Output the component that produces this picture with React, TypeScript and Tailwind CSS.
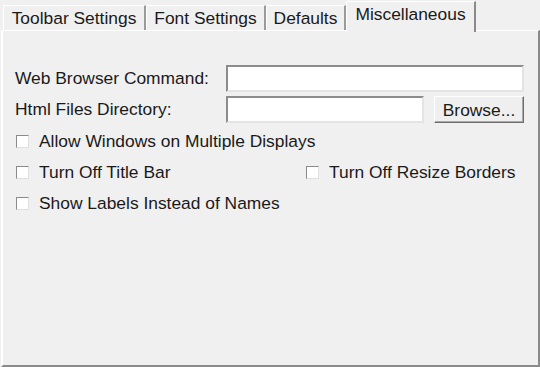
import React from "react";

const TABS = [
  { label: "Toolbar Settings", w: "w-[143px]" },
  { label: "Font Settings", w: "w-[120px]" },
  { label: "Defaults", w: "w-[80px]" },
];

function Check({ label }: { label: string }) {
  return (
    <label className="flex items-center gap-[10px] leading-[20px]">
      <span className="w-[13px] h-[13px] bg-white border border-t-[#8a8a8a] border-l-[#8a8a8a] border-r-[#e0e0e0] border-b-[#e0e0e0]" />
      <span>{label}</span>
    </label>
  );
}

function Field({ width }: { width: string }) {
  return (
    <div
      className={`${width} h-[27px] bg-white border-2 border-t-[#8c8c8c] border-l-[#8c8c8c] border-r-[#e4e4e4] border-b-[#e4e4e4]`}
    />
  );
}

export default function App() {
  return (
    <div
      className="w-[540px] h-[367px] bg-[#f0f0f0] text-[17.4px] text-[#1a1a1a] overflow-hidden"
      style={{ fontFamily: '"Liberation Sans", Arial, sans-serif' }}
    >
      {/* Tabs */}
      <div className="flex items-end h-[30px] pl-[3px]">
        {TABS.map((t) => (
          <div
            key={t.label}
            className={`${t.w} h-[25px] pt-[1px] flex items-center justify-center bg-[#f0f0f0] border-l border-t border-white border-r-2 border-r-[#9a9a9a] leading-none`}
          >
            {t.label}
          </div>
        ))}
        <div className="relative z-10 w-[130px] h-[31px] -mb-[2px] pt-[4px] text-center bg-[#f0f0f0] border-l border-t border-white border-r-2 border-r-[#8a8a8a] leading-none">
          Miscellaneous
        </div>
      </div>

      {/* Panel */}
      <div className="ml-[1px] w-[539px] h-[337px] border-l-2 border-t border-white border-r-2 border-r-[#8a8a8a] border-b-2 border-b-[#8a8a8a] pl-[12px] pr-[13px] pt-[34px]">
        <div className="flex items-center h-[27px]">
          <span className="w-[211px]">Web Browser Command:</span>
          <Field width="w-[298px]" />
        </div>
        <div className="flex items-center h-[27px] mt-[4px]">
          <span className="w-[211px]">Html Files Directory:</span>
          <Field width="w-[198px]" />
          <button className="ml-[10px] w-[90px] h-[27px] bg-[#efefef] border border-t-white border-l-white border-r-[#6f6f6f] border-b-[#6f6f6f] shadow-[inset_-1px_-1px_0_#a8a8a8]">
            Browse...
          </button>
        </div>
        <div className="mt-[8px] flex flex-col gap-[11px] pl-[1px]">
          <Check label="Allow Windows on Multiple Displays" />
          <div className="flex">
            <div className="w-[290px]">
              <Check label="Turn Off Title Bar" />
            </div>
            <Check label="Turn Off Resize Borders" />
          </div>
          <Check label="Show Labels Instead of Names" />
        </div>
      </div>
    </div>
  );
}
